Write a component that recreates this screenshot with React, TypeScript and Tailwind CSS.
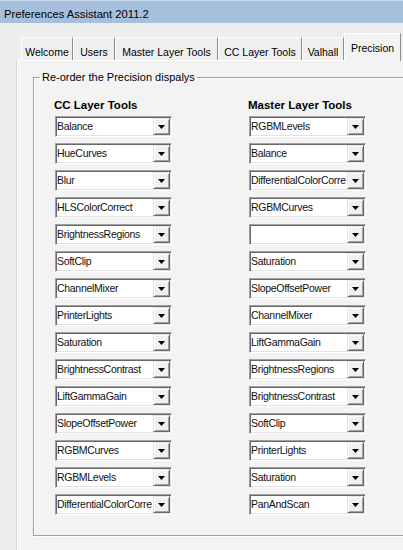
const tabs = [
  { label: "Welcome", width: "w-[52px]" },
  { label: "Users", width: "w-[42px]" },
  { label: "Master Layer Tools", width: "w-[103px]" },
  { label: "CC Layer Tools", width: "w-[84px]" },
  { label: "Valhall", width: "w-[42px]" },
];

const ccTools = [
  "Balance",
  "HueCurves",
  "Blur",
  "HLSColorCorrect",
  "BrightnessRegions",
  "SoftClip",
  "ChannelMixer",
  "PrinterLights",
  "Saturation",
  "BrightnessContrast",
  "LiftGammaGain",
  "SlopeOffsetPower",
  "RGBMCurves",
  "RGBMLevels",
  "DifferentialColorCorre",
];

const masterTools = [
  "RGBMLevels",
  "Balance",
  "DifferentialColorCorre",
  "RGBMCurves",
  "",
  "Saturation",
  "SlopeOffsetPower",
  "ChannelMixer",
  "LiftGammaGain",
  "BrightnessRegions",
  "BrightnessContrast",
  "SoftClip",
  "PrinterLights",
  "Saturation",
  "PanAndScan",
];

function Combo({ value }: { value: string }) {
  return (
    <div className="ml-px flex h-[21px] w-[117px] border border-t-[#a0a0a0] border-l-[#a0a0a0] border-r-white border-b-white bg-white p-px shadow-[inset_1px_1px_0_#696969,inset_-1px_-1px_0_#e3e3e3]">
      <div className="min-w-0 flex-1 whitespace-nowrap text-[10.5px] leading-[17px] tracking-[-0.3px] text-[#111]">
        {value}
      </div>
      <div className="flex h-[17px] w-[17px] shrink-0 items-center justify-center border border-t-[#e3e3e3] border-l-[#e3e3e3] border-r-[#696969] border-b-[#696969] bg-[#f0f0f0] shadow-[inset_1px_1px_0_#fff,inset_-1px_-1px_0_#a0a0a0]">
        <svg width="7" height="4" viewBox="0 0 7 4" className="mt-px">
          <path d="M0 0h7L3.5 4z" fill="#000" />
        </svg>
      </div>
    </div>
  );
}

function ToolColumn({ title, items }: { title: string; items: string[] }) {
  return (
    <div className="flex w-[118px] flex-col">
      <div className="mb-[4px] whitespace-nowrap text-[11.5px] font-bold leading-[14px] text-black">{title}</div>
      <div className="flex flex-col gap-[6px]">
        {items.map((item, i) => (
          <Combo key={i} value={item} />
        ))}
      </div>
    </div>
  );
}

export default function App() {
  return (
    <div className="h-[550px] w-[403px] overflow-hidden bg-[#ededed] font-['Liberation_Sans',Arial,sans-serif] text-black">
      {/* Title bar */}
      <div className="h-[23px] border-t border-[#c9d8ea] bg-[#a6bfdc] pl-[4px] pt-[6px] text-[11.2px] leading-[14px]">
        Preferences Assistant 2011.2
      </div>

      {/* Tabs */}
      <div className="mt-[10px] flex h-[27px] items-end pl-[21px]">
        {tabs.map((t) => (
          <div
            key={t.label}
            className={`${t.width} flex h-[23px] shrink-0 justify-center border-t border-l border-r border-t-white border-l-white border-r-[#8c8c8c] bg-[#efefef] pt-[7px] text-[10.5px] leading-[14px] whitespace-nowrap`}
          >
            {t.label}
          </div>
        ))}
        <div className="relative z-10 -mb-px flex h-[28px] w-[57px] shrink-0 justify-center border-t border-l border-r border-t-white border-l-white border-r-[#8c8c8c] bg-[#f3f3f3] pt-[7px] text-[10.5px] leading-[14px]">
          Precision
        </div>
      </div>

      {/* Tab page */}
      <div className="ml-[17px] h-[500px] border-t border-l border-white bg-[#f3f3f3] shadow-[-1px_0_0_#d4d4d4]">
        <fieldset className="ml-[15px] mt-[9px] w-[390px] border border-[#a0a0a0] shadow-[1px_1px_0_#fff,inset_1px_1px_0_#fff]">
          <legend className="ml-[6px] px-[2px] text-[11px] leading-[14px]">
            Re-order the Precision dispalys
          </legend>
          <div className="flex gap-[76px] pb-[20px] pl-[20px] pt-[14px]">
            <ToolColumn title="CC Layer Tools" items={ccTools} />
            <ToolColumn title="Master Layer Tools" items={masterTools} />
          </div>
        </fieldset>
      </div>
    </div>
  );
}
